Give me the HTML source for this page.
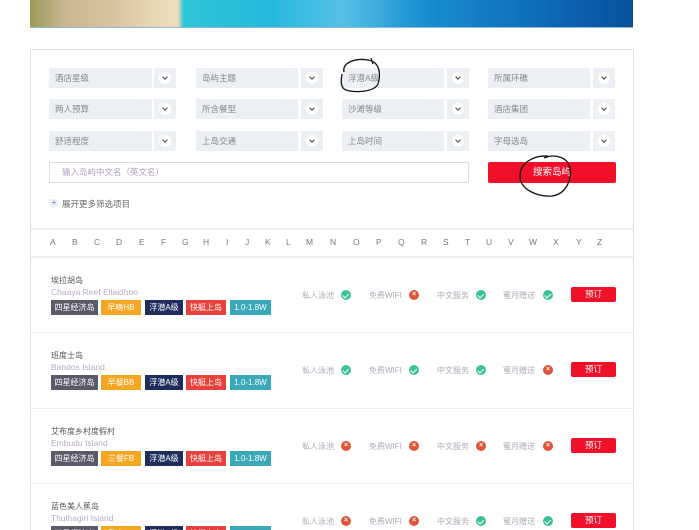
<!DOCTYPE html>
<html><head><meta charset="utf-8">
<style>
*{margin:0;padding:0;box-sizing:border-box}
html,body{width:699px;height:530px;overflow:hidden}
body{background:#fff;position:relative;font-family:"Liberation Sans","Noto Sans CJK SC",sans-serif;}
.a{position:absolute}
.banner{left:30px;top:0;width:603px;height:28px;background:linear-gradient(90deg,#9a9a5a 0%,#cdb792 6%,#d9c3a0 14%,#e8d5b5 20%,#eedcbc 24.5%,#2ec6d8 25.5%,#27b8dc 40%,#56c0e6 52%,#1a8fcf 65%,#0d6bb8 85%,#08509a 100%);border-bottom:1px solid #8fb7d6}
.card{left:30px;top:49px;width:604px;height:500px;border:1px solid #e0e0e0;border-bottom:none}
.sel{height:20px;background:#eceff3;font-size:8.5px;color:#888;line-height:20px;padding-left:6px}
.arr{width:22px;height:20px;background:#eceff3}
.arr i{position:absolute;left:5px;top:4px;width:12px;height:12px;border-radius:50%;background:#fff}
.arr i:after{content:"";position:absolute;left:4px;top:2.5px;width:3px;height:3px;border-right:1.5px solid #444;border-bottom:1.5px solid #444;transform:rotate(45deg)}
.inp{left:49px;top:162px;width:420px;height:21px;border:1px solid #ddd;font-size:8.5px;color:#b0a0c0;line-height:19px;padding-left:12px}
.btn{left:488px;top:162px;width:128px;height:21px;background:#f0102a;color:#fff;font-size:9.5px;line-height:21px;text-align:center;border-radius:2px}
.hl{height:2px;background:#eee;left:31px;width:602px}
.let{top:237px;font-size:8.5px;color:#777}
.nm{font-size:8px;color:#555}
.en{font-size:8.5px;color:#b8a8c8}
.tag{height:15px;font-size:8px;color:#fff;line-height:15px;text-align:center}
.ft{font-size:8px;color:#b0a8b8}
.ic{width:10px;height:10px;border-radius:50%}
.ok{background:#3cc09a}
.ok:after{content:"";position:absolute;left:3px;top:1.5px;width:2.5px;height:4.5px;border-right:1.5px solid #fff;border-bottom:1.5px solid #fff;transform:rotate(45deg)}
.no{background:#e0553a;color:#fff;font-size:7px;line-height:10px;text-align:center;font-weight:bold}
.bk{width:45px;height:15px;background:#f0102a;color:#fff;font-size:8.5px;line-height:15px;text-align:center;border-radius:2px}
.sep{left:31px;width:602px;height:1px;background:#eee}
.c1{left:341px}.c2{left:409px}.c3{left:476px}.c4{left:543px}
</style></head><body>
<div class="a banner"></div>
<div class="a card"></div>

<div class="a sel" style="left:49px;top:68px;width:103px">酒店星级</div><div class="a arr" style="left:154px;top:68px"><i></i></div>
<div class="a sel" style="left:196px;top:68px;width:102px">岛屿主题</div><div class="a arr" style="left:301px;top:68px"><i></i></div>
<div class="a sel" style="left:342px;top:68px;width:102px">浮潜A级</div><div class="a arr" style="left:447px;top:68px"><i></i></div>
<div class="a sel" style="left:488px;top:68px;width:102px">所属环礁</div><div class="a arr" style="left:593px;top:68px"><i></i></div>

<div class="a sel" style="left:49px;top:99px;width:103px">两人预算</div><div class="a arr" style="left:154px;top:99px"><i></i></div>
<div class="a sel" style="left:196px;top:99px;width:102px">所含餐型</div><div class="a arr" style="left:301px;top:99px"><i></i></div>
<div class="a sel" style="left:342px;top:99px;width:102px">沙滩等级</div><div class="a arr" style="left:447px;top:99px"><i></i></div>
<div class="a sel" style="left:488px;top:99px;width:102px">酒店集团</div><div class="a arr" style="left:593px;top:99px"><i></i></div>

<div class="a sel" style="left:49px;top:131px;width:103px">舒适程度</div><div class="a arr" style="left:154px;top:131px"><i></i></div>
<div class="a sel" style="left:196px;top:131px;width:102px">上岛交通</div><div class="a arr" style="left:301px;top:131px"><i></i></div>
<div class="a sel" style="left:342px;top:131px;width:102px">上岛时间</div><div class="a arr" style="left:447px;top:131px"><i></i></div>
<div class="a sel" style="left:488px;top:131px;width:102px">字母选岛</div><div class="a arr" style="left:593px;top:131px"><i></i></div>

<div class="a inp">输入岛屿中文名（英文名）</div>
<div class="a btn">搜索岛屿</div>

<div class="a" style="left:50px;top:199px;width:8px;height:8px;background:#eef2f8;color:#4a78c8;font-size:8px;line-height:8px;text-align:center">+</div>
<div class="a" style="left:62px;top:198px;font-size:8.5px;color:#666">展开更多筛选项目</div>

<svg class="a" style="left:0;top:0" width="699" height="530">
<path d="M344 72 C342 62,356 58,368 60 C380 62,381 74,378 84 C374 92,356 93,346 90 C340 88,341 80,342 74" fill="none" stroke="#111" stroke-width="1.3"/>
<path d="M371 58 L373 64" stroke="#111" stroke-width="1.2"/>
<path d="M544 158 C556 153,568 158,570 168 C572 180,566 194,552 196 C538 197,520 190,520 176 C520 164,532 155,548 156" fill="none" stroke="#111" stroke-width="1.3"/>
</svg>

<div class="a hl" style="top:228px"></div>
<div class="a hl" style="top:256px"></div>
<div class="a let" style="left:50px">A</div><div class="a let" style="left:72px">B</div><div class="a let" style="left:94px">C</div><div class="a let" style="left:116px">D</div><div class="a let" style="left:139px">E</div><div class="a let" style="left:161px">F</div><div class="a let" style="left:182px">G</div><div class="a let" style="left:203px">H</div><div class="a let" style="left:226px">I</div><div class="a let" style="left:245px">J</div><div class="a let" style="left:265px">K</div><div class="a let" style="left:286px">L</div><div class="a let" style="left:306px">M</div><div class="a let" style="left:330px">N</div><div class="a let" style="left:353px">O</div><div class="a let" style="left:376px">P</div><div class="a let" style="left:398px">Q</div><div class="a let" style="left:421px">R</div><div class="a let" style="left:443px">S</div><div class="a let" style="left:465px">T</div><div class="a let" style="left:486px">U</div><div class="a let" style="left:508px">V</div><div class="a let" style="left:529px">W</div><div class="a let" style="left:553px">X</div><div class="a let" style="left:576px">Y</div><div class="a let" style="left:597px">Z</div>

<!-- item 1 -->
<div class="a nm" style="left:51px;top:275px">埃拉胡岛</div>
<div class="a en" style="left:51px;top:287px">Chaaya Reef Ellaidhoo</div>
<div class="a tag" style="left:51px;top:300px;width:47px;background:#5a5a68">四星经济岛</div>
<div class="a tag" style="left:101px;top:300px;width:40px;background:#f5a623">早晚HB</div>
<div class="a tag" style="left:145px;top:300px;width:38px;background:#1e2d5c">浮潜A级</div>
<div class="a tag" style="left:186px;top:300px;width:40px;background:#e8403a">快艇上岛</div>
<div class="a tag" style="left:230px;top:300px;width:41px;background:#3aa8b8">1.0-1.8W</div>
<div class="a ft" style="left:302px;top:290px">私人泳池</div><div class="a ic ok c1" style="top:290px"></div>
<div class="a ft" style="left:369px;top:290px">免费WIFI</div><div class="a ic no c2" style="top:290px">×</div>
<div class="a ft" style="left:437px;top:290px">中文服务</div><div class="a ic ok c3" style="top:290px"></div>
<div class="a ft" style="left:503px;top:290px">蜜月赠送</div><div class="a ic ok c4" style="top:290px"></div>
<div class="a bk" style="left:571px;top:287px">预订</div>
<div class="a sep" style="top:332px"></div>

<!-- item 2 -->
<div class="a nm" style="left:51px;top:350px">班度士岛</div>
<div class="a en" style="left:51px;top:362px">Bandos Island</div>
<div class="a tag" style="left:51px;top:375px;width:47px;background:#5a5a68">四星经济岛</div>
<div class="a tag" style="left:101px;top:375px;width:40px;background:#f5a623">早餐BB</div>
<div class="a tag" style="left:145px;top:375px;width:38px;background:#1e2d5c">浮潜A级</div>
<div class="a tag" style="left:186px;top:375px;width:40px;background:#e8403a">快艇上岛</div>
<div class="a tag" style="left:230px;top:375px;width:41px;background:#3aa8b8">1.0-1.8W</div>
<div class="a ft" style="left:302px;top:365px">私人泳池</div><div class="a ic ok c1" style="top:365px"></div>
<div class="a ft" style="left:369px;top:365px">免费WIFI</div><div class="a ic ok c2" style="top:365px"></div>
<div class="a ft" style="left:437px;top:365px">中文服务</div><div class="a ic ok c3" style="top:365px"></div>
<div class="a ft" style="left:503px;top:365px">蜜月赠送</div><div class="a ic no c4" style="top:365px">×</div>
<div class="a bk" style="left:571px;top:362px">预订</div>
<div class="a sep" style="top:408px"></div>

<!-- item 3 -->
<div class="a nm" style="left:51px;top:426px">艾布度乡村度假村</div>
<div class="a en" style="left:51px;top:438px">Embudu Island</div>
<div class="a tag" style="left:51px;top:451px;width:47px;background:#5a5a68">四星经济岛</div>
<div class="a tag" style="left:101px;top:451px;width:40px;background:#f5a623">三餐FB</div>
<div class="a tag" style="left:145px;top:451px;width:38px;background:#1e2d5c">浮潜A级</div>
<div class="a tag" style="left:186px;top:451px;width:40px;background:#e8403a">快艇上岛</div>
<div class="a tag" style="left:230px;top:451px;width:41px;background:#3aa8b8">1.0-1.8W</div>
<div class="a ft" style="left:302px;top:441px">私人泳池</div><div class="a ic no c1" style="top:441px">×</div>
<div class="a ft" style="left:369px;top:441px">免费WIFI</div><div class="a ic no c2" style="top:441px">×</div>
<div class="a ft" style="left:437px;top:441px">中文服务</div><div class="a ic no c3" style="top:441px">×</div>
<div class="a ft" style="left:503px;top:441px">蜜月赠送</div><div class="a ic no c4" style="top:441px">×</div>
<div class="a bk" style="left:571px;top:438px">预订</div>
<div class="a sep" style="top:483px"></div>

<!-- item 4 -->
<div class="a nm" style="left:51px;top:501px">蓝色美人蕉岛</div>
<div class="a en" style="left:51px;top:513px">Thulhagiri Island</div>
<div class="a tag" style="left:51px;top:526px;width:47px;background:#5a5a68">四星经济岛</div>
<div class="a tag" style="left:101px;top:526px;width:40px;background:#f5a623">早晚HB</div>
<div class="a tag" style="left:145px;top:526px;width:38px;background:#1e2d5c">浮潜A级</div>
<div class="a tag" style="left:186px;top:526px;width:40px;background:#e8403a">快艇上岛</div>
<div class="a tag" style="left:230px;top:526px;width:41px;background:#3aa8b8">1.0-1.8W</div>
<div class="a ft" style="left:302px;top:516px">私人泳池</div><div class="a ic no c1" style="top:516px">×</div>
<div class="a ft" style="left:369px;top:516px">免费WIFI</div><div class="a ic no c2" style="top:516px">×</div>
<div class="a ft" style="left:437px;top:516px">中文服务</div><div class="a ic ok c3" style="top:516px"></div>
<div class="a ft" style="left:503px;top:516px">蜜月赠送</div><div class="a ic ok c4" style="top:516px"></div>
<div class="a bk" style="left:571px;top:513px">预订</div>
</body></html>
